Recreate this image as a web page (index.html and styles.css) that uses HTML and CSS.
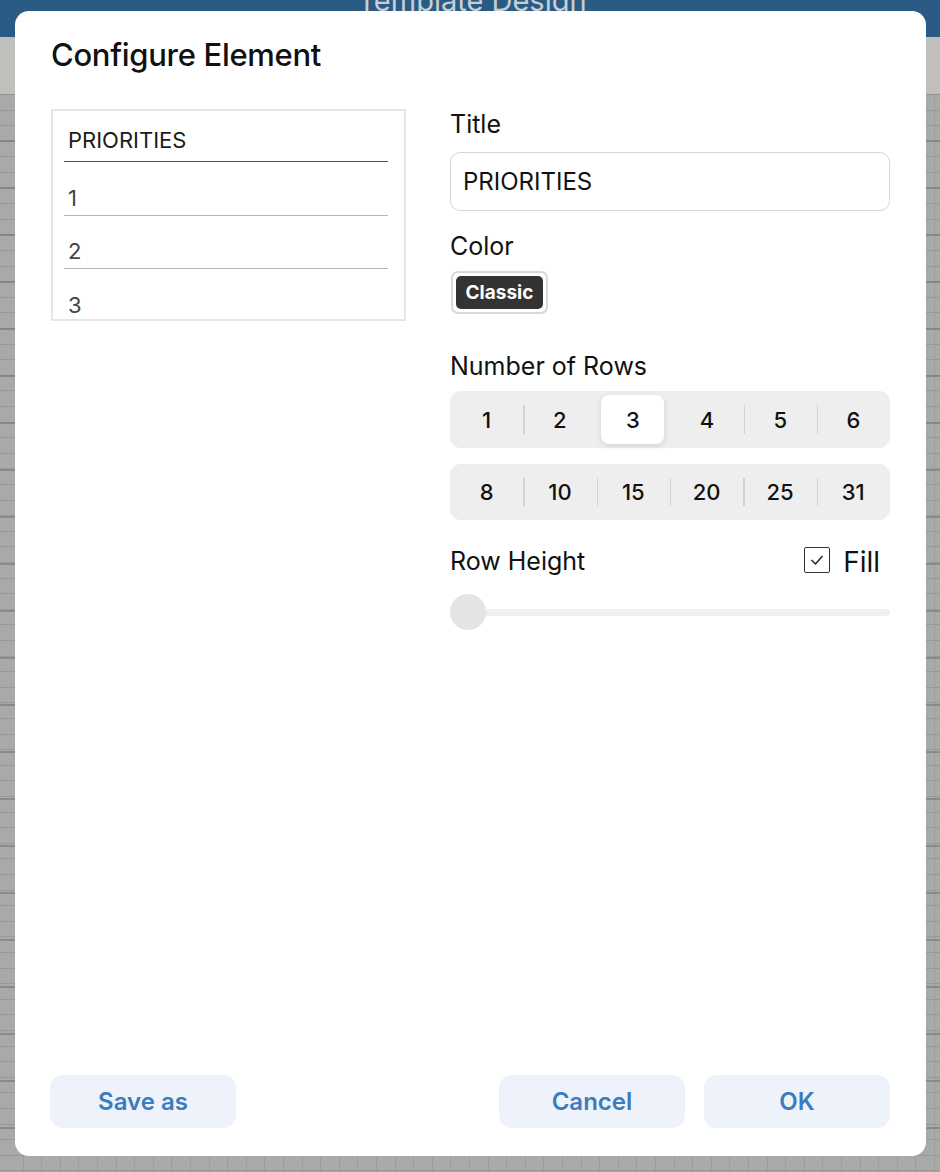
FILE: index.html
```html
<!DOCTYPE html>
<html lang="en">
<head>
<meta charset="utf-8">
<title>Configure Element</title>
<link rel="stylesheet" href="styles.css">
</head>
<body>
<div class="app">
  <header class="appbar"><span class="appbar-title">Template Design</span></header>
  <div class="ruler"></div>
  <div class="canvas"></div>
</div>

<div class="dialog">
  <h1 class="dialog-title">Configure Element</h1>

  <div class="dialog-body">
    <div class="preview">
      <div class="preview-head">PRIORITIES</div>
      <div class="preview-row">1</div>
      <div class="preview-row">2</div>
      <div class="preview-row">3</div>
    </div>

    <div class="form">
      <div class="label">Title</div>
      <div class="input">PRIORITIES</div>

      <div class="label label-color">Color</div>
      <div class="color-btn"><span class="color-chip">Classic</span></div>

      <div class="label label-rows">Number of Rows</div>
      <div class="segmented">
        <div class="seg">1</div>
        <div class="seg">2</div>
        <div class="seg seg-selected">3</div>
        <div class="seg seg-after">4</div>
        <div class="seg">5</div>
        <div class="seg">6</div>
      </div>
      <div class="segmented segmented-2">
        <div class="seg seg-first">8</div>
        <div class="seg">10</div>
        <div class="seg">15</div>
        <div class="seg">20</div>
        <div class="seg">25</div>
        <div class="seg">31</div>
      </div>

      <div class="height-row">
        <div class="label">Row Height</div>
        <label class="fill">
          <span class="checkbox">
            <svg width="16" height="12" viewBox="0 0 16 12"><polyline points="2.5,6 6.5,10 13.5,2" fill="none" stroke="#222" stroke-width="1.5"/></svg>
          </span>
          <span class="fill-text">Fill</span>
        </label>
      </div>
      <div class="slider">
        <div class="slider-track"></div>
        <div class="slider-thumb"></div>
      </div>
    </div>
  </div>

  <div class="dialog-footer">
    <button class="btn">Save as</button>
    <div class="footer-right">
      <button class="btn">Cancel</button>
      <button class="btn">OK</button>
    </div>
  </div>
</div>
</body>
</html>
```
FILE: styles.css
```css
html, body {
  margin: 0;
  padding: 0;
}
body {
  width: 940px;
  height: 1172px;
  overflow: hidden;
  font-family: Inter, "Noto Sans", sans-serif;
  position: relative;
}

/* background app */
.app {
  display: flex;
  flex-direction: column;
  height: 1172px;
}
.appbar {
  height: 37px;
  background: #295b85;
  display: flex;
  justify-content: center;
  overflow: hidden;
}
.appbar-title {
  font-size: 29px;
  line-height: 34px;
  margin-top: -16px;
  color: #c9ced3;
  margin-left: 4px;
}
.ruler {
  height: 57px;
  background: #bfc0bb;
  border-bottom: 1px solid #8f928e;
}
.canvas {
  flex: 1;
  background-color: #a7aaa6;
  background-image:
    repeating-linear-gradient(to bottom, transparent 0, transparent 45px, #73767299 45px, #73767299 47px),
    repeating-linear-gradient(to bottom, transparent 0, transparent 14.6px, #969995 14.6px, #969995 15.6px),
    repeating-linear-gradient(to right, transparent 0, transparent 17.6px, #9a9d99 17.6px, #9a9d99 18.6px);
  background-position: 0 0, 0 0, 5px 0;
}

/* dialog */
.dialog {
  position: absolute;
  left: 15px;
  top: 11px;
  width: 911px;
  height: 1145px;
  box-sizing: border-box;
  background: #fff;
  border-radius: 14px;
  padding: 26px 36px 28px;
  display: flex;
  flex-direction: column;
  color: #111;
}
.dialog-title {
  margin: 0;
  font-size: 31px;
  line-height: 36px;
  font-weight: 500;
  letter-spacing: -0.3px;
}
.dialog-body {
  margin-top: 36px;
  display: grid;
  grid-template-columns: 355px 440px;
  column-gap: 44px;
  align-items: start;
}

/* preview */
.preview {
  box-sizing: border-box;
  height: 212px;
  border: 2px solid #e6e6ea;
  padding: 0 16px 0 11px;
  overflow: hidden;
}
.preview-head,
.preview-row {
  display: flex;
  align-items: flex-end;
  box-sizing: border-box;
  font-size: 22px;
  line-height: 1;
  padding-left: 4px;
}
.preview-head {
  height: 51px;
  padding-bottom: 10px;
  border-bottom: 1.5px solid #555;
  color: #1b1b1b;
}
.preview-row {
  height: 53.5px;
  padding-bottom: 6px;
  border-bottom: 1px solid #b5b5b5;
  color: #444;
}

/* form */
.form {
  display: flex;
  flex-direction: column;
}
.label {
  font-size: 25px;
  line-height: 30px;
  color: #111;
}
.input {
  margin-top: 13px;
  height: 59px;
  box-sizing: border-box;
  border: 1px solid #d6d6d6;
  border-radius: 10px;
  padding: 0 12px;
  display: flex;
  align-items: center;
  font-size: 24px;
  color: #111;
}
.label-color {
  margin-top: 20px;
}
.color-btn {
  margin-top: 10px;
  align-self: flex-start;
  margin-left: 1px;
  width: 97px;
  height: 43px;
  box-sizing: border-box;
  border: 2px solid #d9d9d9;
  border-radius: 7px;
  padding: 3px;
  display: flex;
}
.color-chip {
  flex: 1;
  background: #333;
  border-radius: 5px;
  color: #fff;
  font-weight: 700;
  font-size: 19px;
  display: flex;
  align-items: center;
  justify-content: center;
}
.label-rows {
  margin-top: 37px;
}
.segmented {
  margin-top: 10px;
  height: 57px;
  box-sizing: border-box;
  background: #eeeeee;
  border-radius: 11px;
  padding: 4px 0;
  display: flex;
}
.segmented-2 {
  margin-top: 16px;
  height: 56px;
}
.seg {
  flex: 1;
  position: relative;
  display: flex;
  align-items: center;
  justify-content: center;
  font-size: 22px;
  font-weight: 500;
  color: #111;
}
.seg::before {
  content: "";
  position: absolute;
  left: 0;
  top: 10px;
  bottom: 10px;
  width: 1.5px;
  background: #d3d3d3;
}
.seg:first-child::before,
.seg-selected::before,
.seg-after::before {
  display: none;
}
.seg-selected {
  background: #fff;
  border-radius: 8px;
  margin: 0 5px;
  flex: 0 0 63px;
  box-shadow: 0 2px 6px rgba(0, 0, 0, 0.12);
}
.seg-selected + .seg {
  margin-left: 1px;
}
.height-row {
  margin-top: 24px;
  display: flex;
  justify-content: space-between;
  align-items: center;
  padding-right: 10px;
}
.fill {
  display: flex;
  align-items: center;
  gap: 13px;
  margin-top: 3px;
}
.checkbox {
  width: 26px;
  height: 26px;
  box-sizing: border-box;
  border: 1.5px solid #333;
  border-radius: 2px;
  display: flex;
  align-items: center;
  justify-content: center;
  margin-top: -5px;
}
.fill-text {
  font-size: 28px;
  line-height: 30px;
  color: #111;
}
.slider {
  margin-top: 17px;
  height: 36px;
  position: relative;
  display: flex;
  align-items: center;
}
.slider-track {
  flex: 1;
  height: 7px;
  background: #efefef;
  border-radius: 4px;
}
.slider-thumb {
  position: absolute;
  left: 0;
  top: 0;
  width: 36px;
  height: 36px;
  border-radius: 50%;
  background: #e4e4e4;
}

/* footer */
.dialog-footer {
  margin-top: auto;
  display: flex;
  justify-content: space-between;
  margin-left: -1px;
}
.footer-right {
  display: flex;
  gap: 19px;
}
.btn {
  width: 186px;
  height: 53px;
  border: none;
  border-radius: 13px;
  background: #eef2fa;
  color: #3b7cbd;
  font-family: Inter, "Noto Sans", sans-serif;
  font-size: 24px;
  font-weight: 600;
  padding: 0;
}
```
